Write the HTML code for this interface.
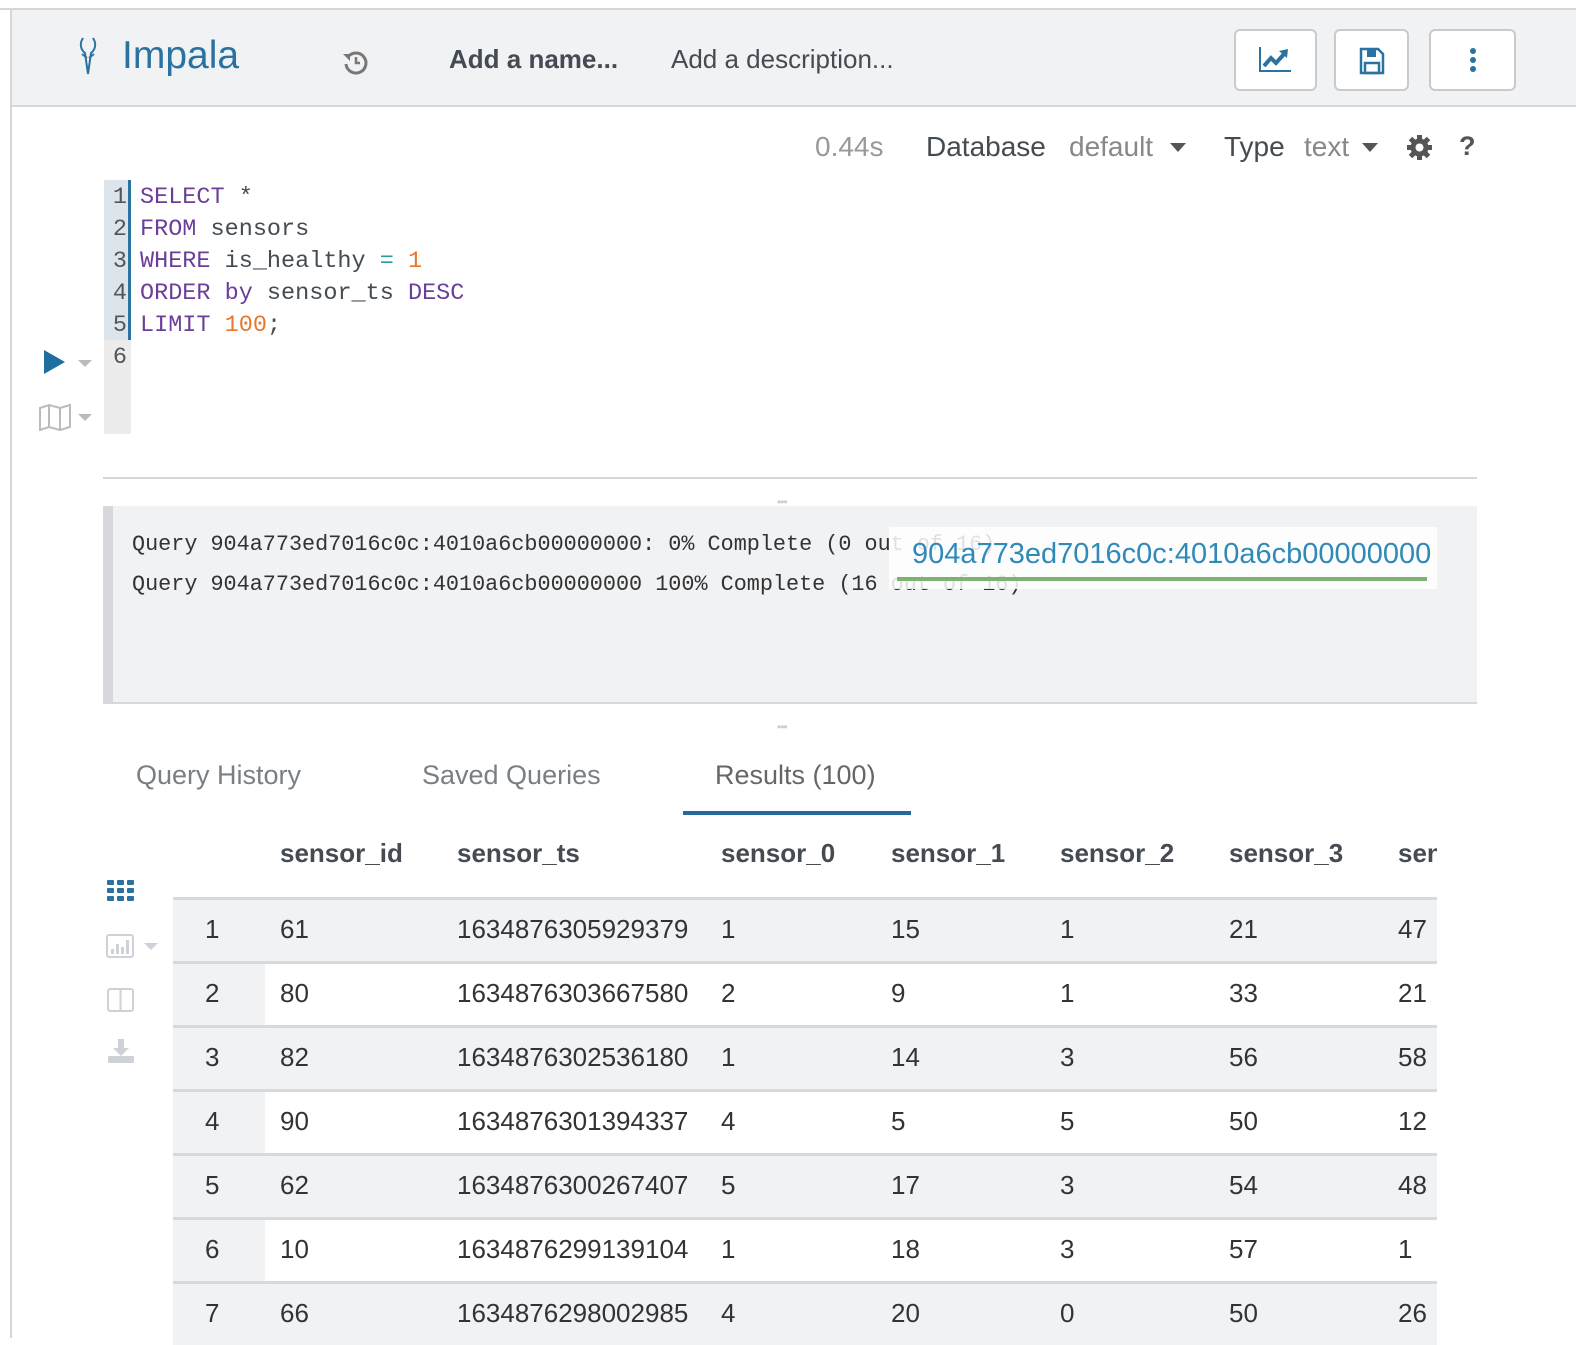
<!DOCTYPE html>
<html><head><meta charset="utf-8"><style>
*{margin:0;padding:0;box-sizing:border-box}
body{width:1576px;height:1338px;overflow:hidden;background:#fff;font-family:"Liberation Sans",sans-serif;position:relative;color:#444b52}
.a{position:absolute;white-space:nowrap}
.mono{font-family:"Liberation Mono",monospace}
.btn{position:absolute;top:29px;height:62px;background:#fff;border:2px solid #c8cacd;border-radius:6px}
.cl{position:absolute;font-size:23.5px;line-height:32px;left:140px}
.kw{color:#6b3f99}.num{color:#e8772e}.op{color:#2a9aa0}
.ln{position:absolute;left:104px;width:23px;text-align:right;font-size:23.5px;line-height:32px;color:#555}
.row{position:absolute;left:173px;width:1264px;height:64px;border-top:3px solid #d8d9db;font-size:26px;color:#333}
.row span{position:absolute;top:14px}
.g{background:#f1f2f4}
.idx{position:absolute;left:0;top:0;width:92px;height:61px;background:#f1f2f4}
.th{position:absolute;top:838px;font-size:26px;font-weight:bold;color:#444b52}
</style></head><body>
<div class="a" style="left:0;top:8px;width:1576px;height:2px;background:#d6d7d9"></div>
<div class="a" style="left:10px;top:10px;width:2px;height:1328px;background:#d6d7d9"></div>
<div class="a" style="left:12px;top:10px;width:1564px;height:97px;background:#f1f2f4;border-bottom:2px solid #d6d7d9"></div>
<svg class="a" style="left:76px;top:36px" width="24" height="40" viewBox="0 0 24 40"><path d="M7 2 C3 8 5 14 9 17 L12 38 M17 2 C21 8 19 14 15 17 L12 38 M6 18 L11 22 M18 18 L13 22" stroke="#2a73a0" stroke-width="2" fill="none"/></svg>
<div class="a" style="left:122px;top:34px;font-size:39px;color:#2a73a0">Impala</div>
<svg class="a" style="left:342px;top:49px" width="27" height="26" viewBox="0 0 27 26"><path d="M6 8 A10 10 0 1 1 4 15" stroke="#777" stroke-width="3" fill="none"/><path d="M1 5 L8 5 L8 12Z" fill="#777"/><path d="M14 8 L14 14 L18 14" stroke="#777" stroke-width="2.5" fill="none"/></svg>
<div class="a" style="left:449px;top:44px;font-size:26px;font-weight:bold;color:#444b52">Add a name...</div>
<div class="a" style="left:671px;top:44px;font-size:26px;color:#444b52">Add a description...</div>
<div class="btn" style="left:1234px;width:83px"><svg style="position:absolute;left:22px;top:16px" width="34" height="26" viewBox="0 0 34 26"><path d="M2 0 V24 H33" stroke="#2a73a0" stroke-width="2" fill="none"/><path d="M6 19 L13 11 L18 16 L27 6" stroke="#2a73a0" stroke-width="4" fill="none"/><path d="M21 4 L30 2 L29 11Z" fill="#2a73a0"/></svg></div>
<div class="btn" style="left:1334px;width:75px"><svg style="position:absolute;left:23px;top:16px" width="26" height="28" viewBox="0 0 26 28"><path d="M2 2 H19 L24 7 V26 H2Z" stroke="#2a73a0" stroke-width="2.5" fill="none"/><rect x="8" y="2" width="9" height="8" fill="#2a73a0"/><rect x="6" y="16" width="14" height="10" stroke="#2a73a0" stroke-width="2.5" fill="none"/></svg></div>
<div class="btn" style="left:1429px;width:87px"><div style="position:absolute;left:39px;top:17px;width:6px;height:6px;border-radius:3px;background:#2a73a0;box-shadow:0 9px 0 #2a73a0,0 18px 0 #2a73a0"></div></div>

<div class="a" style="left:815px;top:131px;font-size:28px;color:#999">0.44s</div>
<div class="a" style="left:926px;top:131px;font-size:28px;color:#444b52">Database</div>
<div class="a" style="left:1069px;top:131px;font-size:28px;color:#888">default</div>
<div class="a" style="left:1170px;top:143px;border:8px solid transparent;border-top:9px solid #555;border-bottom:0"></div>
<div class="a" style="left:1224px;top:131px;font-size:28px;color:#444b52">Type</div>
<div class="a" style="left:1304px;top:131px;font-size:28px;color:#888">text</div>
<div class="a" style="left:1362px;top:143px;border:8px solid transparent;border-top:9px solid #555;border-bottom:0"></div>
<svg class="a" style="left:1406px;top:134px" width="27" height="27" viewBox="0 0 27 27"><circle cx="13.5" cy="13.5" r="9" fill="#555"/><g stroke="#555" stroke-width="5"><path d="M13.5 1V26M1 13.5H26M4.5 4.5L22.5 22.5M22.5 4.5L4.5 22.5"/></g><circle cx="13.5" cy="13.5" r="4" fill="#fff"/></svg>
<div class="a" style="left:1459px;top:131px;font-size:27px;font-weight:bold;color:#555">?</div>

<div class="a" style="left:104px;top:180px;width:27px;height:160px;background:#dce4ec;border-right:3px solid #2a73a0"></div>
<div class="a" style="left:104px;top:340px;width:27px;height:94px;background:#ececec"></div>
<div class="ln mono" style="top:182px">1</div><div class="ln mono" style="top:214px">2</div><div class="ln mono" style="top:246px">3</div><div class="ln mono" style="top:278px">4</div><div class="ln mono" style="top:310px">5</div><div class="ln mono" style="top:342px">6</div>
<div class="cl mono" style="top:182px"><span class="kw">SELECT</span> *</div>
<div class="cl mono" style="top:214px"><span class="kw">FROM</span> sensors</div>
<div class="cl mono" style="top:246px"><span class="kw">WHERE</span> is_healthy <span class="op">=</span> <span class="num">1</span></div>
<div class="cl mono" style="top:278px"><span class="kw">ORDER by</span> sensor_ts <span class="kw">DESC</span></div>
<div class="cl mono" style="top:310px"><span class="kw">LIMIT</span> <span class="num">100</span>;</div>
<div class="a" style="left:44px;top:350px;border-left:21px solid #1f6ea0;border-top:12px solid transparent;border-bottom:12px solid transparent"></div>
<div class="a" style="left:78px;top:360px;border:7px solid transparent;border-top:7px solid #bbb;border-bottom:0"></div>
<svg class="a" style="left:38px;top:403px" width="34" height="28" viewBox="0 0 34 28"><path d="M2 5 L11 2 L22 5 L32 2 V24 L22 27 L11 24 L2 27Z M11 2 V24 M22 5 V27" stroke="#bbb" stroke-width="2" fill="none"/></svg>
<div class="a" style="left:78px;top:414px;border:7px solid transparent;border-top:7px solid #bbb;border-bottom:0"></div>

<div class="a" style="left:103px;top:477px;width:1374px;height:2px;background:#d6d7d9"></div>
<div class="a" style="left:777px;top:495px;font-size:12px;color:#ccc;letter-spacing:-1px">•••</div>
<div class="a" style="left:103px;top:506px;width:1374px;height:198px;background:#f1f2f4;border-left:10px solid #d6d8dc;border-bottom:2px solid #d6d8dc"></div>
<div class="a mono" style="left:132px;top:532px;font-size:21.8px;color:#333">Query 904a773ed7016c0c:4010a6cb00000000: 0% Complete (0 out of 16)</div>
<div class="a mono" style="left:132px;top:572px;font-size:21.8px;color:#333">Query 904a773ed7016c0c:4010a6cb00000000 100% Complete (16 out of 16)</div>
<div class="a" style="left:889px;top:527px;width:548px;height:62px;background:rgba(255,255,255,0.85)"></div>
<div class="a" style="left:912px;top:538px;font-size:29px;color:#2f8ab8">904a773ed7016c0c:4010a6cb00000000</div>
<div class="a" style="left:897px;top:577px;width:530px;height:4px;background:#7cb36f"></div>
<div class="a" style="left:777px;top:720px;font-size:12px;color:#ccc;letter-spacing:-1px">•••</div>

<div class="a" style="left:136px;top:760px;font-size:27px;color:#7a7f85">Query History</div>
<div class="a" style="left:422px;top:760px;font-size:27px;color:#7a7f85">Saved Queries</div>
<div class="a" style="left:715px;top:760px;font-size:27px;color:#666">Results (100)</div>
<div class="a" style="left:683px;top:811px;width:228px;height:4px;background:#23699a"></div>

<div class="th" style="left:280px">sensor_id</div>
<div class="th" style="left:457px">sensor_ts</div>
<div class="th" style="left:721px">sensor_0</div>
<div class="th" style="left:891px">sensor_1</div>
<div class="th" style="left:1060px">sensor_2</div>
<div class="th" style="left:1229px">sensor_3</div>
<div class="th" style="left:1398px;width:39px;overflow:hidden">sensor_4</div>

<svg class="a" style="left:107px;top:880px" width="27" height="21" viewBox="0 0 27 21"><g fill="#2a73a0"><rect x="0" y="0" width="7" height="5" rx="1"/><rect x="10" y="0" width="7" height="5" rx="1"/><rect x="20" y="0" width="7" height="5" rx="1"/><rect x="0" y="8" width="7" height="5" rx="1"/><rect x="10" y="8" width="7" height="5" rx="1"/><rect x="20" y="8" width="7" height="5" rx="1"/><rect x="0" y="16" width="7" height="5" rx="1"/><rect x="10" y="16" width="7" height="5" rx="1"/><rect x="20" y="16" width="7" height="5" rx="1"/></g></svg>
<svg class="a" style="left:106px;top:934px" width="28" height="24" viewBox="0 0 28 24"><rect x="1" y="1" width="26" height="22" rx="2" stroke="#ccd2d8" stroke-width="2" fill="none"/><g fill="#ccd2d8"><rect x="5" y="15" width="3" height="5"/><rect x="10" y="10" width="3" height="10"/><rect x="15" y="13" width="3" height="7"/><rect x="20" y="6" width="3" height="14"/></g></svg>
<div class="a" style="left:144px;top:943px;border:7px solid transparent;border-top:7px solid #ccd2d8;border-bottom:0"></div>
<svg class="a" style="left:107px;top:988px" width="27" height="24" viewBox="0 0 27 24"><rect x="1" y="1" width="25" height="22" rx="2" stroke="#ccd2d8" stroke-width="2" fill="none"/><path d="M13.5 1V23" stroke="#ccd2d8" stroke-width="2"/></svg>
<svg class="a" style="left:108px;top:1039px" width="26" height="24" viewBox="0 0 26 24"><path d="M10 0H16V9H21L13 17L5 9H10Z" fill="#ccd2d8"/><rect x="0" y="17" width="26" height="7" rx="1" fill="#ccd2d8"/></svg>

<div class="row g" style="top:897px"><div class="idx"></div><span style="left:32px">1</span><span style="left:107px">61</span><span style="left:284px">1634876305929379</span><span style="left:548px">1</span><span style="left:718px">15</span><span style="left:887px">1</span><span style="left:1056px">21</span><span style="left:1225px">47</span></div>
<div class="row" style="top:961px"><div class="idx"></div><span style="left:32px">2</span><span style="left:107px">80</span><span style="left:284px">1634876303667580</span><span style="left:548px">2</span><span style="left:718px">9</span><span style="left:887px">1</span><span style="left:1056px">33</span><span style="left:1225px">21</span></div>
<div class="row g" style="top:1025px"><div class="idx"></div><span style="left:32px">3</span><span style="left:107px">82</span><span style="left:284px">1634876302536180</span><span style="left:548px">1</span><span style="left:718px">14</span><span style="left:887px">3</span><span style="left:1056px">56</span><span style="left:1225px">58</span></div>
<div class="row" style="top:1089px"><div class="idx"></div><span style="left:32px">4</span><span style="left:107px">90</span><span style="left:284px">1634876301394337</span><span style="left:548px">4</span><span style="left:718px">5</span><span style="left:887px">5</span><span style="left:1056px">50</span><span style="left:1225px">12</span></div>
<div class="row g" style="top:1153px"><div class="idx"></div><span style="left:32px">5</span><span style="left:107px">62</span><span style="left:284px">1634876300267407</span><span style="left:548px">5</span><span style="left:718px">17</span><span style="left:887px">3</span><span style="left:1056px">54</span><span style="left:1225px">48</span></div>
<div class="row" style="top:1217px"><div class="idx"></div><span style="left:32px">6</span><span style="left:107px">10</span><span style="left:284px">1634876299139104</span><span style="left:548px">1</span><span style="left:718px">18</span><span style="left:887px">3</span><span style="left:1056px">57</span><span style="left:1225px">1</span></div>
<div class="row g" style="top:1281px"><div class="idx"></div><span style="left:32px">7</span><span style="left:107px">66</span><span style="left:284px">1634876298002985</span><span style="left:548px">4</span><span style="left:718px">20</span><span style="left:887px">0</span><span style="left:1056px">50</span><span style="left:1225px">26</span></div>
</body></html>
